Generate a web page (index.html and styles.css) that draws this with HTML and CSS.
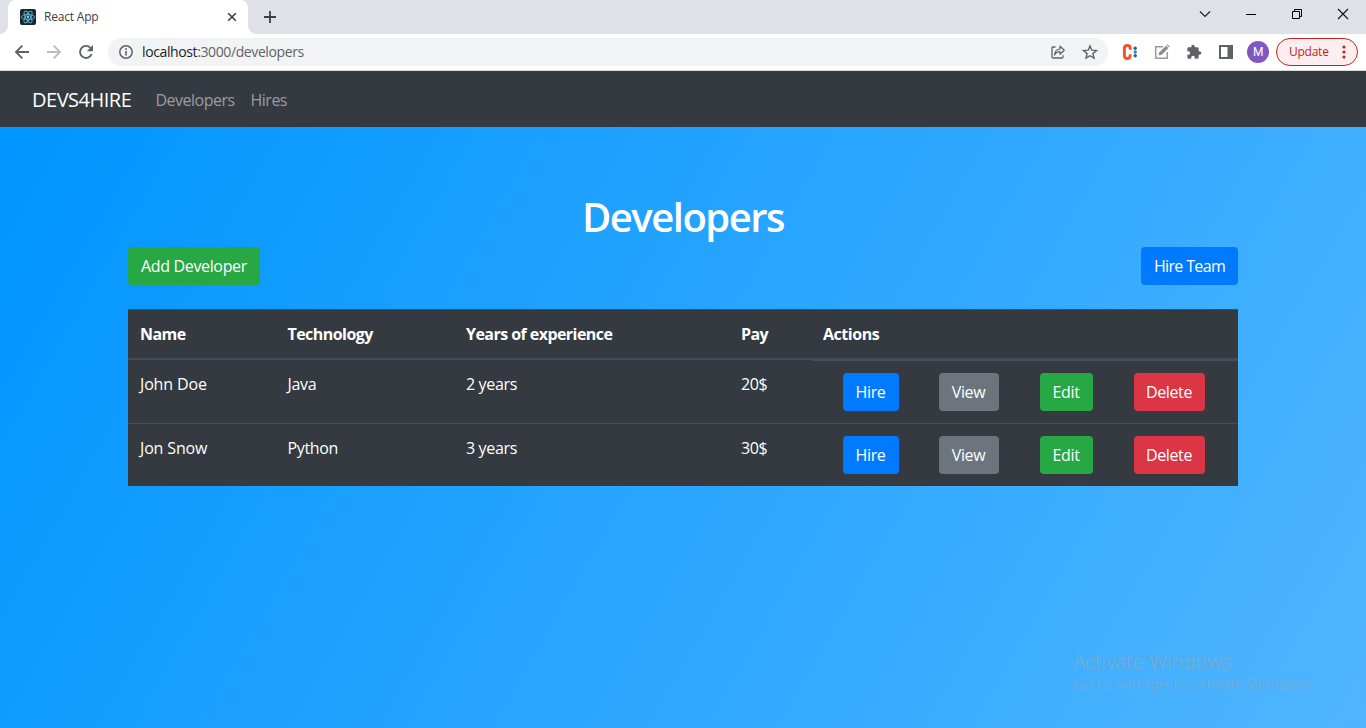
FILE: index.html
```html
<!DOCTYPE html>
<html lang="en">
<head>
<meta charset="utf-8">
<title>React App</title>
<link rel="stylesheet" href="styles.css">
</head>
<body>
<div class="tabstrip">
  <div class="tab">
    <svg class="favicon" width="16" height="16" viewBox="0 0 16 16"><rect width="16" height="16" rx="2" fill="#20232a"/><g fill="none" stroke="#53b9d3" stroke-width=".9"><ellipse cx="8" cy="8" rx="6.6" ry="2.6"/><ellipse cx="8" cy="8" rx="6.6" ry="2.6" transform="rotate(60 8 8)"/><ellipse cx="8" cy="8" rx="6.6" ry="2.6" transform="rotate(120 8 8)"/></g><circle cx="8" cy="8" r="1.4" fill="#61dafb"/></svg>
    <span class="tab-title">React App</span>
    <svg class="tab-close" width="10" height="10" viewBox="0 0 10 10"><path d="M1.2 1.2l7.6 7.6M8.8 1.2L1.2 8.8" stroke="#3c4043" stroke-width="1.6"/></svg>
  </div>
  <svg class="new-tab" width="12" height="12" viewBox="0 0 12 12"><path d="M6 0v12M0 6h12" stroke="#3c4043" stroke-width="1.8"/></svg>
  <div class="window-controls">
    <svg width="12" height="12" viewBox="0 0 12 12"><path d="M1 3.5l5 5 5-5" fill="none" stroke="#222" stroke-width="1.2"/></svg>
    <svg width="12" height="12" viewBox="0 0 12 12"><path d="M1 6.5h10" stroke="#000"/></svg>
    <svg width="12" height="12" viewBox="0 0 12 12"><path d="M1.5 3.500h7v7h-7zM3.500 3.500v-2h7v7h-2" fill="none" stroke="#000"/></svg>
    <svg width="12" height="12" viewBox="0 0 12 12"><path d="M1 1l10 10M11 1L1 11" stroke="#111" stroke-width="1.100"/></svg>
  </div>
</div>
<div class="toolbar">
  <div class="nav-icons">
    <svg width="16" height="16" viewBox="0 0 16 16"><path d="M15 8H2M8.300 1.700L2 8l6.300 6.300" fill="none" stroke="#5f6368" stroke-width="1.900"/></svg>
    <svg width="16" height="16" viewBox="0 0 16 16"><path d="M1 8h13M7.700 1.700L14 8l-6.300 6.300" fill="none" stroke="#babcbe" stroke-width="1.900"/></svg>
    <svg width="16" height="16" viewBox="0 0 16 16"><path d="M13.600 10.200A6 6 0 1 1 12.600 4" fill="none" stroke="#5f6368" stroke-width="1.900"/><path d="M15 1v6.200H8.800z" fill="#5f6368"/></svg>
  </div>
  <div class="omnibox">
    <svg width="14" height="14" viewBox="0 0 14 14"><circle cx="7" cy="7" r="6.200" fill="none" stroke="#5f6368" stroke-width="1.500"/><path d="M7 6v4.500M7 3.300v1.700" stroke="#5f6368" stroke-width="1.600"/></svg>
    <span class="url"><b>localhost</b>:3000/developers</span>
    <svg class="share" width="16" height="16" viewBox="0 0 16 16"><path d="M5.500 3H3.200Q2 3 2 4.200v8.600Q2 14 3.200 14h8.600q1.200 0 1.200-1.200v-1.600" fill="none" stroke="#5f6368" stroke-width="1.300"/><path d="M4.500 11C4.800 7.300 6.800 5.300 10 5V2.200L14.300 6.300 10 10.200V7.600C7.500 7.600 5.800 8.500 4.500 11z" fill="none" stroke="#5f6368" stroke-width="1.200" stroke-linejoin="round"/></svg>
    <svg class="star" width="16" height="16" viewBox="0 0 16 16"><path d="M8 1.900l1.800 4.300 4.600.4-3.500 3 1.100 4.500L8 11.700l-4 2.400 1.100-4.500-3.500-3 4.600-.4z" fill="none" stroke="#5f6368" stroke-width="1.400"/></svg>
  </div>
  <div class="extensions">
    <svg width="16" height="16" viewBox="0 0 16 16"><path d="M8.200 5.700V4.200Q8.200 1.500 5.300 1.500T2.400 4.200v7.600q0 2.700 2.900 2.700t2.900-2.700v-1.500" fill="none" stroke="#f4512c" stroke-width="2.900"/><circle cx="13.200" cy="4.200" r="1.700" fill="#455a64"/><circle cx="13.200" cy="8" r="1.700" fill="#1e88e5"/><circle cx="13.200" cy="11.800" r="1.700" fill="#455a64"/></svg>
    <svg width="16" height="16" viewBox="0 0 16 16"><path d="M9 2.700H1.700v11.600h11.600V8" fill="none" stroke="#9a9a9a" stroke-width="1.500"/><path d="M4.500 11.500l.9-3.200L12 1.700l2.400 2.400-6.600 6.600z" fill="#8c8c8c"/><path d="M12.700 1l.7-.7 2.400 2.400-.7.700z" fill="#8c8c8c"/></svg>
    <svg width="16" height="16" viewBox="0 0 24 24"><path fill="#5f6368" d="M20.500 11H19V7c0-1.100-.9-2-2-2h-4V3.500a2.500 2.500 0 0 0-5 0V5H4c-1.100 0-2 .9-2 2v3.800h1.500a2.700 2.700 0 0 1 0 5.400H2V20c0 1.100.9 2 2 2h3.800v-1.500a2.700 2.700 0 0 1 5.400 0V22H17c1.100 0 2-.9 2-2v-4h1.500a2.500 2.500 0 0 0 0-5z"/></svg>
    <svg width="16" height="16" viewBox="0 0 16 16"><path d="M1 1h14v14H1zM3 3v10h6.500V3z" fill="#5f6368" fill-rule="evenodd"/></svg>
    <span class="avatar">M</span>
  </div>
  <div class="update"><span>Update</span><svg width="4" height="14" viewBox="0 0 4 14" fill="#c5221f"><circle cx="2" cy="2" r="1.600"/><circle cx="2" cy="7" r="1.600"/><circle cx="2" cy="12" r="1.600"/></svg></div>
</div>
<nav class="navbar">
  <span class="brand">DEVS4HIRE</span>
  <span class="link link-devs">Developers</span>
  <span class="link">Hires</span>
</nav>
<main class="page">
  <h1>Developers</h1>
  <div class="top-actions">
    <span class="btn green add">Add Developer</span>
    <span class="btn blue team">Hire Team</span>
  </div>
  <div class="table">
    <div class="row head">
      <div>Name</div><div>Technology</div><div>Years of experience</div><div>Pay</div><div class="last">Actions</div>
    </div>
    <div class="row">
      <div class="name">John Doe</div><div>Java</div><div>2 years</div><div>20$</div>
      <div class="actions"><span class="btn blue hire">Hire</span><span class="btn gray view">View</span><span class="btn green edit">Edit</span><span class="btn red delete">Delete</span></div>
    </div>
    <div class="row second">
      <div class="name">Jon Snow</div><div>Python</div><div>3 years</div><div>30$</div>
      <div class="actions"><span class="btn blue hire">Hire</span><span class="btn gray view">View</span><span class="btn green edit">Edit</span><span class="btn red delete">Delete</span></div>
    </div>
  </div>
  <div class="watermark"><div class="wm-title">Activate Windows</div><div class="wm-sub">Go to Settings to activate Windows.</div></div>
</main>
</body>
</html>
```
FILE: styles.css
```css
* { box-sizing: border-box; }
body {
  margin: 0;
  width: 1366px;
  height: 728px;
  overflow: hidden;
  display: flex;
  flex-direction: column;
  font: 16px/24px "Open Sans", "Noto Sans", sans-serif;
  letter-spacing: -0.35px;
}
svg { display: block; flex: none; }

/* Browser window */
.tabstrip {
  height: 34px;
  flex: none;
  background: #dee1e6;
  display: flex;
  align-items: flex-start;
  padding-left: 8px;
}
.tab {
  position: relative;
  width: 240px;
  height: 34px;
  background: #fff;
  border-radius: 8px 8px 0 0;
  display: flex;
  align-items: center;
  padding: 0 11px 0 12px;
}
.tab::before, .tab::after {
  content: "";
  position: absolute;
  bottom: 0;
  width: 8px;
  height: 8px;
}
.tab::before { left: -8px; background: radial-gradient(circle at 0 0, transparent 7.5px, #fff 8px); }
.tab::after { right: -8px; background: radial-gradient(circle at 100% 0, transparent 7.5px, #fff 8px); }
.tab-title { margin-left: 8px; font-size: 12px; color: #3c4043; letter-spacing: -0.2px; }
.tab-close { margin-left: auto; }
.new-tab { margin: 11px 0 0 16px; }
.window-controls { display: flex; gap: 34px; margin: 8px 17px 0 auto; }

.toolbar {
  height: 37px;
  flex: none;
  background: #fff;
  border-bottom: 1px solid #d6d8da;
  display: flex;
  align-items: center;
  padding: 0 8px 0 14px;
}
.nav-icons { display: flex; gap: 16px; }
.omnibox {
  width: 1000px;
  height: 28px;
  margin-left: 14px;
  border-radius: 14px;
  background: #f1f3f4;
  display: flex;
  align-items: center;
  padding: 0 10px 0 11px;
}
.url { margin-left: 9px; font-size: 14px; color: #5f6368; letter-spacing: -0.39px; }
.url b { font-weight: 400; color: #202124; }
.share { margin-left: auto; }
.star { margin-left: 16px; }
.extensions { display: flex; align-items: center; gap: 16px; margin-left: 14px; }
.avatar {
  width: 22px;
  height: 22px;
  margin-left: -3px;
  border-radius: 50%;
  background: #7e57c2;
  color: #fff;
  font: 12px/22px Roboto, sans-serif;
  text-align: center;
}
.update {
  width: 82px;
  height: 28px;
  margin-left: auto;
  border: 1px solid #c5221f;
  border-radius: 14px;
  background: #fceeee;
  color: #c5221f;
  font-size: 12px;
  letter-spacing: -0.25px;
  display: flex;
  align-items: center;
  justify-content: space-between;
  padding: 0 11px 0 12px;
}

/* Site navigation */
.navbar {
  height: 56px;
  flex: none;
  background: #343a40;
  display: flex;
  align-items: center;
  padding: 2px 32px 0;
  color: #fff;
}
.brand { width: 123.500px; font-size: 20px; line-height: 30px; letter-spacing: -0.5px; }
.link { color: #999da0; letter-spacing: -0.5px; }
.link-devs { width: 95px; }

/* Developer list */
.page {
  position: relative;
  flex: 1;
  padding: 66px 128px 0;
  background: linear-gradient(120deg, #0095ff 0%, #50b5ff 100%);
}
h1 {
  margin: 0 0 6px;
  color: #fff;
  font-size: 40px;
  line-height: 48px;
  font-weight: 600;
  letter-spacing: -1.5px;
  text-align: center;
}
.top-actions { display: flex; justify-content: space-between; margin-bottom: 24px; }
.btn {
  height: 38px;
  border-radius: 4px;
  color: #fff;
  line-height: 39px;
  text-align: center;
  white-space: nowrap;
}
.green { background: #28a745; }
.blue { background: #007bff; }
.gray { background: #6c757d; }
.red { background: #dc3545; }
.add { width: 132px; }
.team { width: 97px; letter-spacing: -0.65px; }
.hire { width: 56px; }
.view { width: 60px; margin-left: 40px; }
.edit { width: 53px; margin-left: 41px; }
.delete { width: 71px; margin-left: 41px; }

.table { background: #343a40; color: #fff; }
.row {
  display: grid;
  grid-template-columns: 147.500px 178.500px 275px 82px 427px;
  height: 63px;
}
.row > div { padding: 12px 0 0 12px; white-space: nowrap; }
.row > .name { letter-spacing: -0.15px; }
.head { height: 51px; font-weight: 700; letter-spacing: -0.55px; border-top: 1px solid #454d55; }
.row.head > div { height: 50px; padding-top: 12px; border-bottom: 2px solid #454d55; }
.row.head > .last { height: 51px; border-bottom-width: 3px; letter-spacing: -0.45px; }
.second { border-top: 1px solid #454d55; }
.row > .actions { display: flex; padding: 13px 0 0 31.500px; }
.second > .actions { padding-top: 12px; }

.watermark {
  position: absolute;
  left: 1073px;
  top: 521px;
  color: #86a8c4;
  white-space: nowrap;
}
.wm-title { font-size: 20px; line-height: 28px; font-weight: 300; letter-spacing: 0.05px; }
.wm-sub { font-size: 15px; line-height: 17px; font-weight: 300; letter-spacing: 0.1px; }
```
